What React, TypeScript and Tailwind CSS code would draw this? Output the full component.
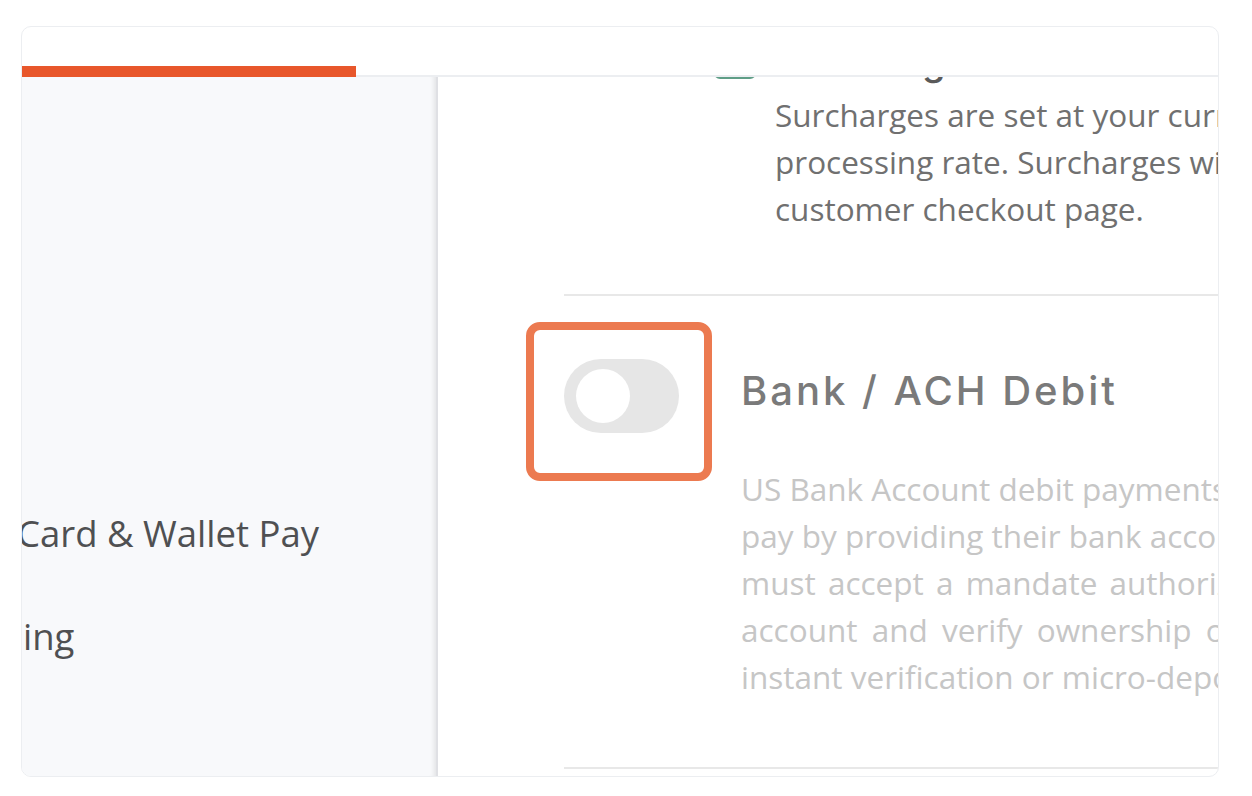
export default function App() {
  const body = "font-['Open_Sans',sans-serif] text-[31.5px] leading-[47px] whitespace-nowrap";
  return (
    <div className="w-[1252px] h-[796px] bg-white pt-[26px] pl-[21px]">
      <div className="w-[1198px] h-[751px] rounded-[10px] border border-[#eceef1] overflow-hidden flex flex-col bg-white">
        <div className="h-[50px] shrink-0 flex items-end border-b-2 border-[#eceef1]">
          <div className="h-[11px] w-[334px] -mb-[2px] bg-[#e8572b]" />
        </div>
        <div className="flex flex-1 min-h-0">
          <div className="w-[416px] shrink-0 bg-[#f8f9fb] border-r-2 border-[#dfe0e4] shadow-[inset_-6px_0_5px_-4px_rgba(0,0,0,0.09)] overflow-hidden pt-[431px] flex flex-col gap-[53px] font-['Open_Sans',sans-serif] text-[36.5px] leading-[50px] text-[#4f5052] whitespace-nowrap">
            <div className="-ml-[5px]">Card &amp; Wallet Pay</div>
            <div className="ml-[1px]">ing</div>
          </div>
          <div className="flex-1 min-w-0 overflow-hidden">
            <div className="-mt-[40px] pl-[126px] w-[1400px]">
              <div className="flex items-start pl-[150px]">
                <div className="w-[42px] h-[42px] shrink-0 rounded-[6px] border-[3px] border-[#5f9e87] bg-white" />
                <div className="ml-[19px]">
                  <div className="font-['Inter',sans-serif] font-medium text-[38px] leading-[48px] tracking-[0.02em] text-[#5a5a5a] whitespace-nowrap">
                    Surcharges
                  </div>
                  <div className={`mt-[6px] ${body} text-[#707070]`}>
                    <div>Surcharges are set at your current</div>
                    <div>processing rate. Surcharges will be shown on the</div>
                    <div>customer checkout page.</div>
                  </div>
                </div>
              </div>
              <div className="mt-[62px] h-[2px] bg-[#e8e8e8]" />
              <div className="mt-[63px] flex items-start">
                <div className="w-[177px] shrink-0">
                  <div className="relative w-[115px] h-[74px]">
                    <div className="w-[115px] h-[74px] rounded-full bg-[#e6e6e6] flex items-center pl-[12px]">
                      <div className="w-[54px] h-[54px] rounded-full bg-white" />
                    </div>
                    <div className="absolute -left-[38px] -top-[37px] w-[186px] h-[159px] rounded-[14px] border-[8px] border-[#ec7a50]" />
                  </div>
                </div>
                <div className="pt-[8px]">
                  <div className="font-['Inter',sans-serif] font-medium text-[40px] leading-[48px] tracking-[3px] text-[#7a7a7a] whitespace-nowrap">
                    Bank / ACH Debit
                  </div>
                  <div className={`mt-[50px] ${body} text-[#c6c6c6]`}>
                    <div>US Bank Account debit payments let customers</div>
                    <div>pay by providing their bank account details. Customers</div>
                    <div className="[word-spacing:4px]">must accept a mandate authorizing you to debit their</div>
                    <div className="[word-spacing:6px]">account and verify ownership of the account with</div>
                    <div>instant verification or micro-deposits.</div>
                  </div>
                </div>
              </div>
              <div className="mt-[67px] h-[2px] bg-[#e8e8e8]" />
            </div>
          </div>
        </div>
      </div>
    </div>
  );
}
